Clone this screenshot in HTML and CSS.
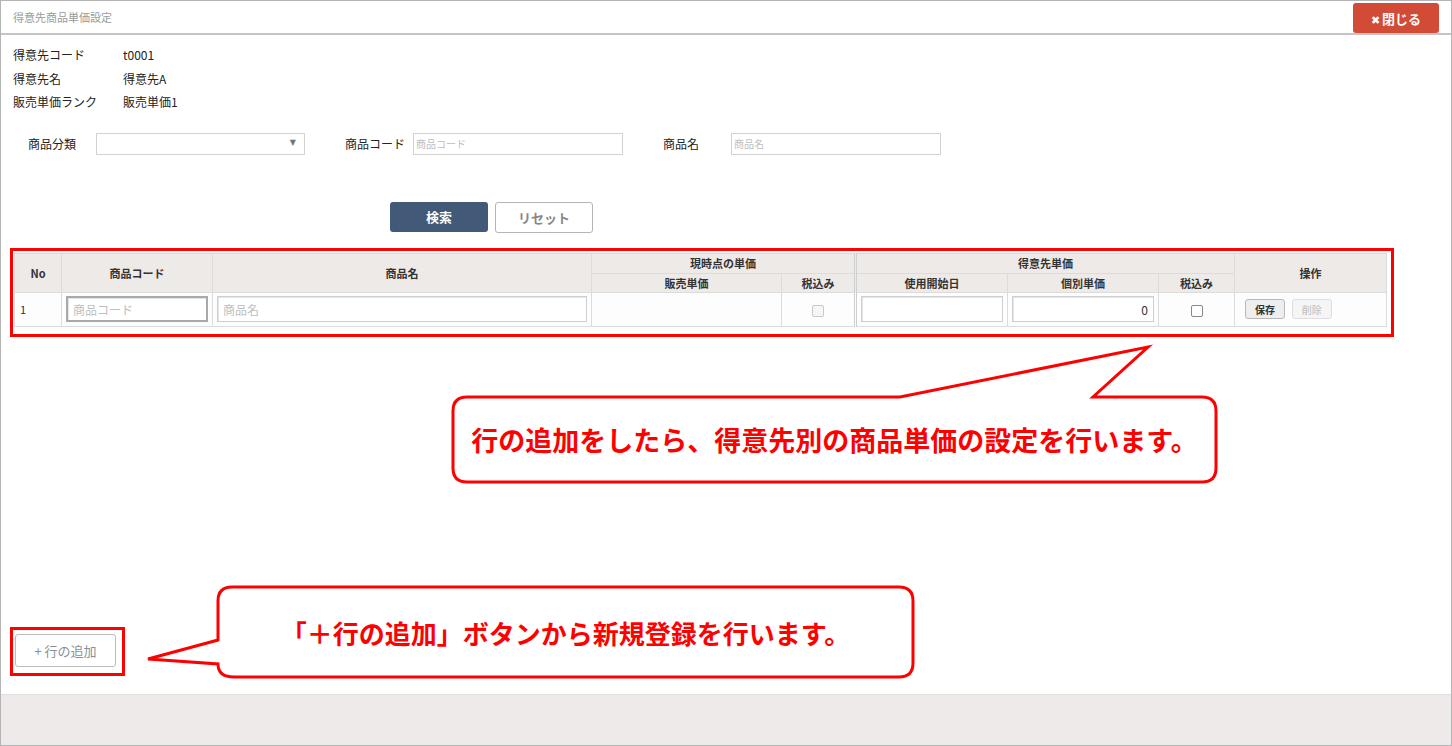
FILE: index.html
```html
<!DOCTYPE html>
<html lang="ja">
<head>
    <meta charset="utf8"/>
    <title>得意先商品単価設定</title>
    <link rel="stylesheet" href="styles.css">
</head>
<body>
<div class="frame">
    <div class="titlebar">
        <span class="title">得意先商品単価設定</span>
        <button class="btn close-btn"><span class="x">✖</span>閉じる</button>
    </div>

    <div class="main">
        <div class="info">
            <span>得意先コード</span><span>t0001</span>
            <span>得意先名</span><span>得意先A</span>
            <span>販売単価ランク</span><span>販売単価1</span>
        </div>

        <div class="search">
            <div class="field">
                <label>商品分類</label>
                <div class="select"><span class="arrow">▼</span></div>
            </div>
            <div class="field">
                <label>商品コード</label>
                <input class="text" type="text" placeholder="商品コード">
            </div>
            <div class="field">
                <label>商品名</label>
                <input class="text" type="text" placeholder="商品名">
            </div>
        </div>

        <div class="actions">
            <button class="btn search-btn">検索</button>
            <button class="btn reset-btn">リセット</button>
        </div>

        <div class="mark table-mark">
            <table class="grid">
                <colgroup>
                    <col style="width:47px">
                    <col style="width:151px">
                    <col style="width:379px">
                    <col style="width:190px">
                    <col style="width:74px">
                    <col style="width:152px">
                    <col style="width:151px">
                    <col style="width:76px">
                    <col style="width:152px">
                </colgroup>
                <tr class="h1">
                    <th rowspan="2">No</th>
                    <th rowspan="2">商品コード</th>
                    <th rowspan="2">商品名</th>
                    <th colspan="2">現時点の単価</th>
                    <th colspan="3" class="sep">得意先単価</th>
                    <th rowspan="2">操作</th>
                </tr>
                <tr class="h2">
                    <th>販売単価</th>
                    <th>税込み</th>
                    <th class="sep">使用開始日</th>
                    <th>個別単価</th>
                    <th>税込み</th>
                </tr>
                <tr class="row">
                    <td class="no">1</td>
                    <td><input class="cell focus" type="text" placeholder="商品コード"></td>
                    <td><input class="cell" type="text" placeholder="商品名"></td>
                    <td></td>
                    <td class="center"><span class="check off"></span></td>
                    <td class="sep"><input class="cell" type="text"></td>
                    <td><input class="cell num" type="text" value="0"></td>
                    <td class="center"><span class="check"></span></td>
                    <td class="ops">
                        <button class="btn small-btn">保存</button>
                        <button class="btn small-btn disabled">削除</button>
                    </td>
                </tr>
            </table>
        </div>

        <div class="add-area">
            <div class="mark add-mark">
                <button class="btn add-btn">+ 行の追加</button>
            </div>
        </div>
    </div>

    <div class="footer"></div>

    <!-- annotation balloons -->
    <div class="callout callout-table">
        <svg width="770" height="142" viewBox="450 344 770 142">
            <path d="M467 397 L900 397 L1148 347 L1093 397 L1202 397 Q1216 397 1216 411 L1216 468 Q1216 482 1202 482 L467 482 Q453 482 453 468 L453 411 Q453 397 467 397 Z"/>
        </svg>
        <div class="msg">行の追加をしたら、得意先別の商品単価の設定を行います。</div>
    </div>

    <div class="callout callout-add">
        <svg width="770" height="95" viewBox="146 585 770 95">
            <path d="M232 587 L899 587 Q913 587 913 601 L913 663 Q913 677 899 677 L234 677 Q218 677 218 664 L148 659 L218 640 L218 601 Q218 587 232 587 Z"/>
        </svg>
        <div class="msg">「＋行の追加」ボタンから新規登録を行います。</div>
    </div>
</div>
</body>
</html>
```

FILE: styles.css
```css
body {
    margin: 0;
    font-family: "Noto Sans CJK JP", "Noto Sans", sans-serif;
    font-size: 12px;
    color: #333;
    background: #fff;
}

.frame {
    position: relative;
    width: 1452px;
    height: 746px;
    box-sizing: border-box;
    border: 1px solid #b4b4b4;
    display: flex;
    flex-direction: column;
}

.titlebar {
    height: 32px;
    border-bottom: 2px solid #c4c4c4;
    display: flex;
    align-items: center;
    justify-content: space-between;
    padding: 0 12px 0 12px;
}

.title {
    font-size: 11px;
    color: #9a9a9a;
}

.btn {
    font-family: inherit;
    cursor: pointer;
    box-sizing: border-box;
}

.close-btn {
    width: 86px;
    height: 30px;
    margin-top: 2px;
    background-color: #d14b36;
    border: none;
    border-radius: 3px;
    color: white;
    font-size: 13px;
    font-weight: bold;
    padding: 0;
}

.close-btn .x {
    font-family: "DejaVu Sans", sans-serif;
    font-size: 11px;
    margin-right: 2px;
}

.main {
    flex: 1;
    display: flex;
    flex-direction: column;
    padding: 8px 12px 18px 12px;
}

.info {
    display: grid;
    grid-template-columns: 110px auto;
    line-height: 23.5px;
    font-size: 12px;
    color: #222;
}

.search {
    display: flex;
    gap: 40px;
    height: 22px;
    margin-top: 19px;
    padding-left: 15px;
}

.field {
    display: flex;
    align-items: center;
}

.field label {
    width: 68px;
    font-size: 12px;
    color: #222;
}

.select {
    position: relative;
    width: 209px;
    height: 22px;
    box-sizing: border-box;
    border: 1px solid #d2d2d2;
}

.select .arrow {
    position: absolute;
    right: 8px;
    top: 4px;
    font-family: "DejaVu Sans", sans-serif;
    font-size: 8px;
    color: #777;
}

.text {
    width: 210px;
    height: 22px;
    box-sizing: border-box;
    border: 1px solid #d2d2d2;
    padding: 0 2px;
    font-family: inherit;
    font-size: 10px;
}

.text::placeholder,
.cell::placeholder {
    color: #bdbdbd;
}

.actions {
    display: flex;
    gap: 7px;
    margin-top: 47px;
    padding-left: 377px;
}

.search-btn {
    width: 98px;
    height: 30px;
    background-color: #425a77;
    border: none;
    border-radius: 3px;
    color: white;
    font-size: 13px;
    font-weight: bold;
}

.reset-btn {
    width: 98px;
    height: 31px;
    background-color: white;
    border: 1px solid #b5b5b5;
    border-radius: 3px;
    color: #8c8886;
    font-size: 13px;
    font-weight: bold;
}

.mark {
    border: 3px solid #ff0000;
    box-sizing: border-box;
}

.table-mark {
    width: 1384px;
    margin: 15px 0 0 -3px;
    padding: 2px 5px 7px 1px;
}

table.grid {
    width: 1372px;
    table-layout: fixed;
    border-collapse: collapse;
}

.grid th,
.grid td {
    border: 1px solid #dcdcdc;
    padding: 0;
}

.grid th {
    background-color: #eeeae8;
    font-size: 11px;
    font-weight: bold;
    color: #333;
    text-align: center;
}

.grid .h1 {
    height: 20px;
}

.grid .h2 {
    height: 19px;
}

.grid .row {
    height: 34px;
}

.grid .row td {
    background-color: #fdfdfd;
}

.grid .sep {
    border-left: 3px double #cfcfcf;
}

.grid td.no {
    padding-left: 5px;
    font-size: 11px;
}

.cell {
    display: block;
    width: calc(100% - 8px);
    height: 26px;
    margin: 0 auto;
    box-sizing: border-box;
    border: 1px solid #cfcfcf;
    box-shadow: inset 1px 1px 1px #e4e4e4;
    padding: 0 5px;
    font-family: inherit;
    font-size: 12px;
    color: #333;
}

.cell.focus {
    border: 2px solid #a9a9a9;
}

.cell.num {
    text-align: right;
}

.center {
    text-align: center;
}

.check {
    display: inline-block;
    width: 10px;
    height: 10px;
    border: 1px solid #888;
    border-radius: 2px;
    background: white;
    vertical-align: -2px;
    margin-top: -8px;
}

.check.off {
    border-color: #c8c8c8;
    background: #f6f6f6;
}

.grid td.ops {
    padding-left: 10px;
}

.small-btn {
    width: 40px;
    height: 20px;
    padding: 0;
    margin-right: 4px;
    background-color: #eeeeee;
    border: 1px solid #b9b9b9;
    border-radius: 3px;
    font-size: 10px;
    font-weight: bold;
    color: #333;
}

.small-btn.disabled {
    background-color: #f5f5f5;
    border-color: #dedede;
    color: #bbb;
    font-weight: normal;
}

.add-area {
    margin-top: auto;
}

.add-mark {
    width: 115px;
    margin-left: -3px;
    padding: 4px 6px 6px 2px;
}

.add-btn {
    display: block;
    width: 101px;
    height: 33px;
    background-color: white;
    border: 1px solid #bcbcbc;
    border-radius: 3px;
    color: #8a8f98;
    font-size: 13px;
}

.footer {
    height: 50px;
    background-color: #eeeae9;
    border-top: 1px solid #e2dedd;
}

.callout {
    position: absolute;
}

.callout svg {
    position: absolute;
    left: 0;
    top: 0;
}

.callout path {
    fill: white;
    stroke: #ff0000;
    stroke-width: 3;
    stroke-linejoin: miter;
}

.callout .msg {
    position: relative;
    display: flex;
    align-items: center;
    justify-content: center;
    color: #ff0000;
    font-weight: bold;
    white-space: nowrap;
}

.callout-table {
    left: 449px;
    top: 343px;
    width: 770px;
    height: 142px;
}

.callout-table .msg {
    margin: 53px 0 0 3px;
    width: 763px;
    height: 85px;
    font-size: 27px;
}

.callout-add {
    left: 145px;
    top: 584px;
    width: 770px;
    height: 95px;
}

.callout-add .msg {
    margin: 2px 0 0 72px;
    width: 695px;
    height: 90px;
    font-size: 26px;
}
```
